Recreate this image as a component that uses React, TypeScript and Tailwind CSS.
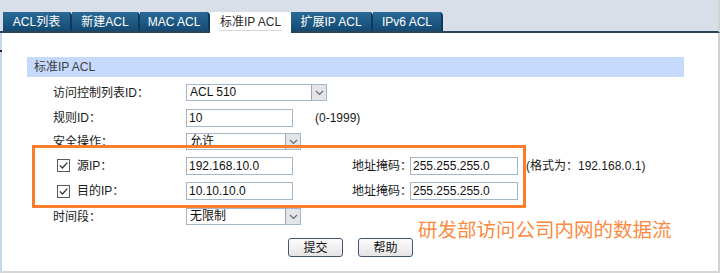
import React from "react";

const tabs = ["ACL列表", "新建ACL", "MAC ACL", "标准IP ACL", "扩展IP ACL", "IPv6 ACL"];
const tabWidths = ["w-[69px]", "w-[68px]", "w-[70px]", "w-[81px]", "w-[82px]", "w-[70px]"];

function Chevron() {
  return (
    <svg width="9" height="6" viewBox="0 0 9 6" fill="none">
      <path d="M1 1l3.5 3.5L8 1" stroke="#6b6b6b" strokeWidth="1.2" />
    </svg>
  );
}

function Select({ value, width }: { value: string; width: string }) {
  return (
    <div className={`${width} h-[17px] flex border border-[#a3b6cc] bg-white`}>
      <div className="flex-1 pl-[3px] text-[12px] leading-[15px] text-[#111]">{value}</div>
      <div className="w-[15px] h-full flex items-center justify-center bg-[#e3e5e8] border-l border-[#9aa5b1]">
        <Chevron />
      </div>
    </div>
  );
}

function Input({ value, width }: { value: string; width: string }) {
  return (
    <div className={`${width} h-[18px] border border-[#a3b6cc] bg-white pl-[2px] text-[12px] leading-[16px] text-[#111]`}>
      {value}
    </div>
  );
}

function Check() {
  return (
    <svg width="13" height="13" viewBox="0 0 13 13" className="ml-[4px] mr-[7px]">
      <rect x="0.5" y="0.5" width="12" height="12" fill="#fff" stroke="#5a5a5a" />
      <path d="M2.8 6.4l2.6 2.6 4.9-5.4" fill="none" stroke="#333" strokeWidth="1.3" />
    </svg>
  );
}

function Button({ label }: { label: string }) {
  return (
    <div className="w-[55px] h-[19px] rounded-[3px] border border-[#3f5870] bg-[linear-gradient(#fdfdfd,#e4e4e4)] flex items-center justify-center text-[12px] text-[#111]">
      {label}
    </div>
  );
}

export default function App() {
  return (
    <div className="relative w-[720px] h-[273px] bg-white overflow-hidden font-['Liberation_Sans','Noto_Sans_CJK_SC',sans-serif]">
      {/* tab strip */}
      <div className="h-[33px] bg-[#d9dfe9] border-b-2 border-[#2a4557] border-r-2 border-r-[#d3d3d3] flex items-end pl-[3px]">
        {tabs.map((t, i) =>
          i === 3 ? (
            <div
              key={t}
              className={`${tabWidths[i]} h-[21px] -mb-[2px] bg-white rounded-t-[3px] flex flex-col items-center justify-center text-[12px] text-[#2b2b2b]`}
            >
              <span className="border-b border-[#d6d6d6] leading-[15px] px-[1px]">{t}</span>
            </div>
          ) : (
            <div
              key={t}
              className={`${tabWidths[i]} h-[19px] rounded-tr-[4px] bg-[linear-gradient(#2a6a98,#134a72)] border-r-2 border-[#0d3a5a] flex items-center justify-center text-[12px] text-white`}
            >
              {t}
            </div>
          )
        )}
      </div>

      {/* body */}
      <div className="h-[240px] border-l-2 border-l-[#c8d5ef] border-r-2 border-r-[#d3d3d3] border-b-2 border-b-[#d6d6d6] pt-[24px] pl-[25px]">
        <div className="w-[657px]">
          <div className="h-[20px] bg-[#c6dafd] pl-[7px] text-[12px] leading-[20px] text-[#3d3d3d]">标准IP ACL</div>

          <div className="pl-[26px] pt-[3px] text-[12px] text-[#1a1a1a]">
            <div className="h-[25px] flex items-center">
              <div className="w-[133px]">访问控制列表ID：</div>
              <Select value="ACL 510" width="w-[141px]" />
            </div>
            <div className="h-[25px] flex items-center">
              <div className="w-[133px]">规则ID：</div>
              <Input value="10" width="w-[107px]" />
              <div className="ml-[22px]">(0-1999)</div>
            </div>
            <div className="h-[23px] flex items-center">
              <div className="w-[133px]">安全操作：</div>
              <Select value="允许" width="w-[115px]" />
            </div>
            <div className="h-[25px] flex items-center">
              <div className="w-[133px] flex items-center">
                <Check />
                <span>源IP：</span>
              </div>
              <Input value="192.168.10.0" width="w-[107px]" />
              <div className="ml-[59px] w-[58px] whitespace-nowrap">地址掩码：</div>
              <Input value="255.255.255.0" width="w-[108px]" />
              <div className="ml-[8px] whitespace-nowrap">(格式为：192.168.0.1)</div>
            </div>
            <div className="h-[26px] flex items-center">
              <div className="w-[133px] flex items-center">
                <Check />
                <span>目的IP：</span>
              </div>
              <Input value="10.10.10.0" width="w-[107px]" />
              <div className="ml-[59px] w-[58px] whitespace-nowrap">地址掩码：</div>
              <Input value="255.255.255.0" width="w-[108px]" />
            </div>
            <div className="h-[25px] flex items-center">
              <div className="w-[133px]">时间段：</div>
              <Select value="无限制" width="w-[115px]" />
            </div>
            <div className="mt-[9px] pl-[235px] flex gap-[15px]">
              <Button label="提交" />
              <Button label="帮助" />
            </div>
          </div>
        </div>
      </div>

      {/* annotation overlays */}
      <div className="absolute left-0 top-[50px] w-[2px] h-[2px] bg-[#222]" />
      <div className="absolute left-[32px] top-[145px] w-[494px] h-[63px] border-[3px] border-[#fa7d2c]" />
      <div className="absolute left-[418px] top-[221px] text-[19.5px] leading-none text-[#fb8a3e] whitespace-nowrap">
        研发部访问公司内网的数据流
      </div>
    </div>
  );
}
